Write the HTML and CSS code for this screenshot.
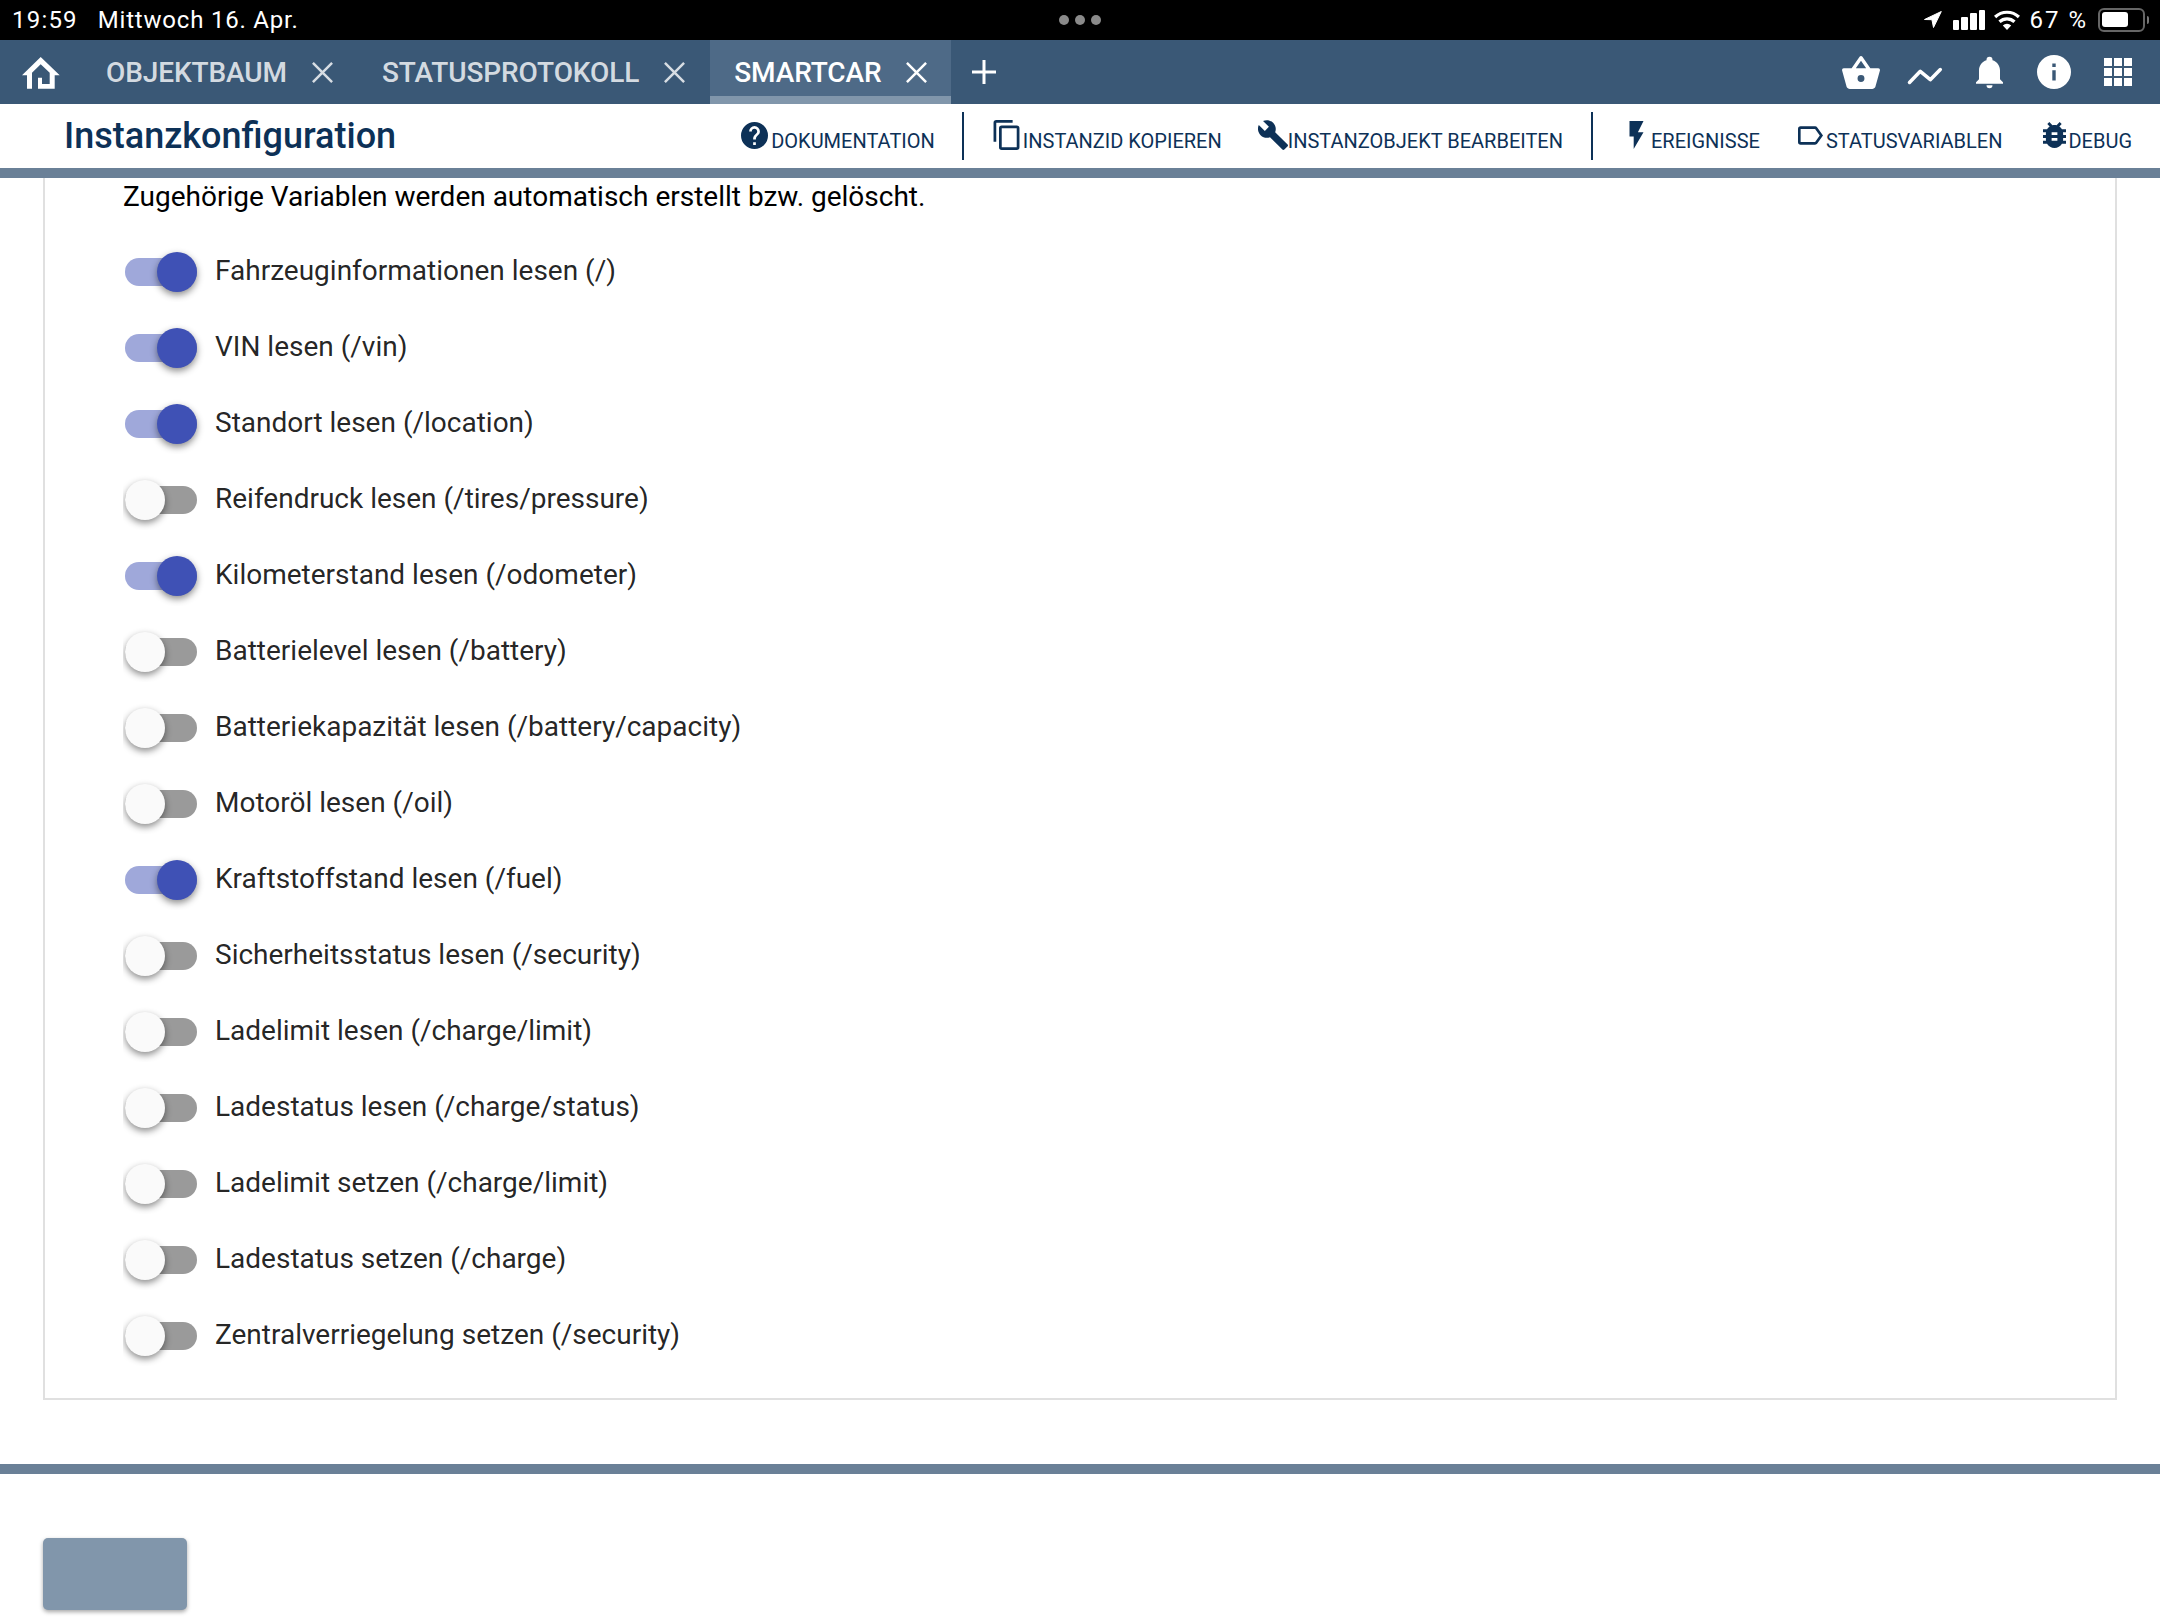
FILE: index.html
```html
<!DOCTYPE HTML>
<html>
<head>
<meta charset="utf-8">
<title>Instanzkonfiguration</title>
<link rel="stylesheet" href="styles.css">
</head>
<body>
<div class="statusbar">
    <div class="status-left"><span class="st-time">19:59</span><span class="st-date">Mittwoch 16. Apr.</span></div>
    <div class="status-dots"><i></i><i></i><i></i></div>
    <div class="status-right">
        <svg class="st-arrow" viewBox="0 0 18 17"><path d="M17.300 .5L9.500 16.500 7.900 8.700 .5 8.500z"/></svg>
        <div class="st-bars"><i></i><i></i><i></i><i></i></div>
        <svg class="st-wifi" viewBox="1 0 26 20"><path d="M14 20l-4.200-4.600a6 6 0 0 1 8.400 0zM7.600 13a9.300 9.300 0 0 1 12.800 0l2.200-2.400a12.600 12.600 0 0 0-17.200 0zM3.200 8.200a15.600 15.600 0 0 1 21.600 0L27 5.800a19 19 0 0 0-26 0z"/></svg>
        <span>67 %</span>
        <div class="st-battery"><i></i></div>
    </div>
</div>

<div class="navbar">
    <svg class="nav-home" viewBox="0 0 38 32"><path d="M18.700 0L37.700 18.300H32.700V31.700H16V20.700H20V27H27.700V15.700L18.700 7.300L10 15.700V31.700H5V18.300H0Z"/></svg>
    <div class="tab"><span>Objektbaum</span><svg class="nav-x" viewBox="0 0 24 24"><path d="M2 2l20 20M22 2L2 22"/></svg></div>
    <div class="tab"><span>Statusprotokoll</span><svg class="nav-x" viewBox="0 0 24 24"><path d="M2 2l20 20M22 2L2 22"/></svg></div>
    <div class="tab active"><span>SmartCar</span><svg class="nav-x" viewBox="0 0 24 24"><path d="M2 2l20 20M22 2L2 22"/></svg></div>
    <svg class="nav-plus" viewBox="0 0 24 24"><path d="M12 0v24M0 12h24"/></svg>
    <div class="nav-icons">
        <svg viewBox="1 2 22 19" class="ic-basket"><path d="M5.5,21C4.72,21 4.04,20.55 3.71,19.9V19.9L1.1,10.44L1,10A1,1 0 0,1 2,9H6.58L11.18,2.43C11.36,2.17 11.66,2 12,2C12.34,2 12.65,2.17 12.83,2.44L17.42,9H22A1,1 0 0,1 23,10L22.96,10.29L20.29,19.9C19.96,20.55 19.28,21 18.5,21H5.5M12,4.74L9,9H15L12,4.74M12,13A2,2 0 0,0 10,15A2,2 0 0,0 12,17A2,2 0 0,0 14,15A2,2 0 0,0 12,13Z"/></svg>
        <svg viewBox="0 0 36 18" class="ic-chart"><path d="M2.500 15.500L13.300 4.300 23.300 12.700 33.300 2.500"/></svg>
        <svg viewBox="3 2 18 21" class="ic-bell"><path d="M21,19V20H3V19L5,17V11C5,7.9 7.03,5.17 10,4.29C10,4.19 10,4.1 10,4A2,2 0 0,1 12,2A2,2 0 0,1 14,4C14,4.1 14,4.19 14,4.29C16.97,5.17 19,7.9 19,11V17L21,19M14,21A2,2 0 0,1 12,23A2,2 0 0,1 10,21"/></svg>
        <svg viewBox="2 2 20 20" class="ic-info"><path d="M13,9H11V7H13M13,17H11V11H13M12,2A10,10 0 0,0 2,12A10,10 0 0,0 12,22A10,10 0 0,0 22,12A10,10 0 0,0 12,2Z"/></svg>
        <div class="ic-apps"><i></i><i></i><i></i><i></i><i></i><i></i><i></i><i></i><i></i></div>
    </div>
</div>

<div class="toolbar">
    <h1>Instanzkonfiguration</h1>
    <div class="tools">
        <div class="tool t-doc"><svg viewBox="2 2 20 20"><path d="M15.07,11.25L14.17,12.17C13.45,12.89 13,13.5 13,15H11V14.5C11,13.39 11.45,12.39 12.17,11.67L13.41,10.41C13.78,10.05 14,9.55 14,9C14,7.89 13.1,7 12,7A2,2 0 0,0 10,9H8A4,4 0 0,1 12,5A4,4 0 0,1 16,9C16,9.88 15.64,10.67 15.07,11.25M13,19H11V17H13M12,2A10,10 0 0,0 2,12A10,10 0 0,0 12,22A10,10 0 0,0 22,12A10,10 0 0,0 12,2Z"/></svg><span>Dokumentation</span></div>
        <div class="sep"></div>
        <div class="tool t-copy"><svg viewBox="2 1 19 22"><path d="M19,21H8V7H19M19,5H8A2,2 0 0,0 6,7V21A2,2 0 0,0 8,23H19A2,2 0 0,0 21,21V7A2,2 0 0,0 19,5M16,1H4A2,2 0 0,0 2,3V17H4V3H16V1Z"/></svg><span>InstanzID kopieren</span></div>
        <div class="tool t-edit"><svg viewBox="1 1 22 22"><path d="M22.7,19L13.6,9.9C14.5,7.6 14,4.9 12.1,3C10.1,1 7.1,0.6 4.7,1.7L9,6L6,9L1.6,4.7C0.4,7.1 0.9,10.1 2.9,12.1C4.8,14 7.5,14.5 9.8,13.6L18.9,22.7C19.3,23.1 19.9,23.1 20.3,22.7L22.6,20.4C23.1,20 23.1,19.3 22.7,19Z"/></svg><span>Instanzobjekt bearbeiten</span></div>
        <div class="sep"></div>
        <div class="tool t-events"><svg viewBox="7 2 10 20"><path d="M7,2V13H10V22L17,10H13L17,2H7Z"/></svg><span>Ereignisse</span></div>
        <div class="tool t-vars"><svg viewBox="3 5 19 14"><path d="M16,17H5V7H16L19.55,12M17.630,5.84C17.27,5.33 16.67,5 16,5H5A2,2 0 0,0 3,7V17A2,2 0 0,0 5,19H16C16.67,19 17.27,18.66 17.63,18.15L22,12L17.63,5.84Z"/></svg><span>Statusvariablen</span></div>
        <div class="tool t-debug"><svg viewBox="4 3 16 18"><path fill-rule="evenodd" d="M14,12H10V10H14M14,16H10V14H14M20,8H17.19C16.74,7.22 16.12,6.55 15.37,6.04L17,4.41L15.59,3L13.42,5.17C12.96,5.06 12.5,5 12,5C11.5,5 11.04,5.06 10.59,5.17L8.41,3L7,4.41L8.62,6.04C7.88,6.55 7.26,7.22 6.81,8H4V10H6.09C6.04,10.33 6,10.66 6,11V12H4V14H6V15C6,15.34 6.04,15.67 6.09,16H4V18H6.81C7.85,19.79 9.78,21 12,21C14.22,21 16.15,19.79 17.19,18H20V16H17.91C17.96,15.67 18,15.34 18,15V14H20V12H18V11C18,10.66 17.96,10.33 17.91,10H20V8Z"/></svg><span>Debug</span></div>
    </div>
</div>
<div class="rule"></div>

<div class="content">
    <div class="card">
        <p class="intro">Zugehörige Variablen werden automatisch erstellt bzw. gelöscht.</p>
        <div class="row"><div class="toggle on"></div><span>Fahrzeuginformationen lesen (/)</span></div>
        <div class="row"><div class="toggle on"></div><span>VIN lesen (/vin)</span></div>
        <div class="row"><div class="toggle on"></div><span>Standort lesen (/location)</span></div>
        <div class="row"><div class="toggle"></div><span>Reifendruck lesen (/tires/pressure)</span></div>
        <div class="row"><div class="toggle on"></div><span>Kilometerstand lesen (/odometer)</span></div>
        <div class="row"><div class="toggle"></div><span>Batterielevel lesen (/battery)</span></div>
        <div class="row"><div class="toggle"></div><span>Batteriekapazität lesen (/battery/capacity)</span></div>
        <div class="row"><div class="toggle"></div><span>Motoröl lesen (/oil)</span></div>
        <div class="row"><div class="toggle on"></div><span>Kraftstoffstand lesen (/fuel)</span></div>
        <div class="row"><div class="toggle"></div><span>Sicherheitsstatus lesen (/security)</span></div>
        <div class="row"><div class="toggle"></div><span>Ladelimit lesen (/charge/limit)</span></div>
        <div class="row"><div class="toggle"></div><span>Ladestatus lesen (/charge/status)</span></div>
        <div class="row"><div class="toggle"></div><span>Ladelimit setzen (/charge/limit)</span></div>
        <div class="row"><div class="toggle"></div><span>Ladestatus setzen (/charge)</span></div>
        <div class="row"><div class="toggle"></div><span>Zentralverriegelung setzen (/security)</span></div>
    </div>
</div>
<div class="rule footer-rule"></div>
<div class="footer"><div class="save"></div></div>
</body>
</html>
```

FILE: styles.css
```css
html, body {
    margin: 0;
    height: 1620px;
    overflow: hidden;
    background: #fff;
    font-family: Roboto, "Liberation Sans", sans-serif;
}

/* ios status bar */
.statusbar {
    height: 40px;
    background: #000;
    color: #fff;
    font-size: 24px;
    display: flex;
    align-items: center;
    justify-content: space-between;
    padding: 0 12px;
    box-sizing: border-box;
    position: relative;
}
.status-left { display: flex; gap: 20px; }
.st-time { letter-spacing: 1.2px; }
.st-date { letter-spacing: .8px; }
.status-dots {
    position: absolute;
    left: 1059px;
    top: 15px;
    display: flex;
    gap: 6px;
}
.status-dots i { width: 10px; height: 10px; border-radius: 50%; background: #8a8a8a; }
.status-right { display: flex; align-items: center; }
.status-right span { margin-left: 9px; letter-spacing: 2px; }
.st-arrow { width: 18px; height: 17px; fill: #fff; stroke: #fff; stroke-width: 1; stroke-linejoin: round; margin-top: -2px; }
.st-bars { display: flex; align-items: flex-end; gap: 2.300px; margin-left: 11px; height: 20px; }
.st-bars i { width: 6.500px; background: #fff; border-radius: 1px; }
.st-bars i:nth-child(1) { height: 10px; }
.st-bars i:nth-child(2) { height: 13px; }
.st-bars i:nth-child(3) { height: 17px; }
.st-bars i:nth-child(4) { height: 20px; }
.st-wifi { width: 26px; height: 20px; fill: #fff; margin-left: 9px; }
.st-battery {
    width: 47px;
    height: 24px;
    border: 2px solid #666;
    border-radius: 6px;
    box-sizing: border-box;
    margin-left: 10px;
    margin-right: 3px;
    padding: 2px;
    position: relative;
}
.st-battery i { display: block; width: 26px; height: 15px; background: #fff; border-radius: 3px; }
.st-battery::after {
    content: "";
    position: absolute;
    right: -6px;
    top: 6px;
    width: 2px;
    height: 8px;
    background: #777;
    border-radius: 0 2px 2px 0;
}

/* tabs */
.navbar {
    height: 64px;
    background: #3a5876;
    display: flex;
    align-items: stretch;
    color: #fff;
}
.nav-home { width: 38px; height: 32px; fill: #fff; margin: 17px 0 0 22px; }
.tab {
    display: flex;
    align-items: center;
    padding: 0 24px;
    gap: 24px;
    font-size: 28px;
    font-weight: 500;
    letter-spacing: -.1px;
    text-transform: uppercase;
    color: rgba(255,255,255,.8);
    box-sizing: border-box;
}
.tab:nth-child(2) { margin-left: 23px; padding-left: 23px; }
.tab.active {
    color: #fff;
    background: #4e6a87;
    border-bottom: 8px solid #8196ab;
    padding-top: 8px;
    padding-right: 23px;
    gap: 23px;
}
.nav-x { width: 23px; height: 23px; fill: none; stroke: currentColor; stroke-width: 2.600; }
.nav-plus { width: 24px; height: 24px; fill: none; stroke: #fff; stroke-width: 3; margin: 20px 0 0 21px; }
.nav-icons {
    margin-left: auto;
    padding-right: 28px;
    display: flex;
    align-items: center;
}
.nav-icons svg { fill: #fff; flex: none; }
.ic-basket { width: 38px; height: 33px; }
.nav-icons .ic-chart {
    width: 36px;
    height: 18px;
    margin: 7px 0 0 27px;
    fill: none;
    stroke: #fff;
    stroke-width: 3.500;
    stroke-linecap: round;
    stroke-linejoin: round;
}
.ic-bell { width: 27px; height: 33px; margin-left: 33px; }
.ic-info { width: 34px; height: 34px; margin-left: 34px; }
.ic-apps {
    width: 28px;
    height: 28px;
    margin-left: 33px;
    display: grid;
    grid-template-columns: repeat(3, 1fr);
    gap: 2.500px;
}
.ic-apps i { background: #fff; }

/* title + actions */
.toolbar {
    height: 64px;
    display: flex;
    align-items: center;
    justify-content: space-between;
    color: #0d3157;
}
.toolbar h1 {
    margin: 0 0 0 64px;
    font-size: 36px;
    font-weight: 500;
}
.tools { display: flex; align-items: center; padding-right: 28px; }
.tool {
    display: flex;
    align-items: center;
    gap: 3px;
    font-size: 20px;
    text-transform: uppercase;
    padding-top: 10px;
}
.tool svg { fill: #0d3157; margin-top: -12px; }
.sep { width: 2px; height: 48px; background: #0d3157; }
.t-doc svg { width: 27px; height: 27px; }
.t-doc { margin-right: 27px; }
.t-copy { margin-left: 29px; }
.t-copy svg { width: 27px; height: 30px; }
.t-edit { margin-left: 36px; margin-right: 28px; gap: 0; }
.t-edit svg { width: 30px; height: 30px; }
.t-events { margin-left: 36px; gap: 7px; }
.t-events svg { width: 15px; height: 28px; }
.t-vars { margin-left: 38px; }
.t-vars svg { width: 25px; height: 19px; }
.t-debug { margin-left: 41px; gap: 2px; }
.t-debug svg { width: 23px; height: 26px; }

.rule { height: 10px; background: #6a8097; }

/* form */
.content {
    height: 1286px;
    padding: 0 43px;
    overflow: hidden;
}
.card {
    height: 1222px;
    box-sizing: border-box;
    border: solid #e0e0e0;
    border-width: 0 2px 2px;
    padding-left: 78px;
}
.intro {
    margin: 0;
    height: 56px;
    line-height: 38px;
    font-size: 28px;
    color: #000;
}
.row {
    height: 76px;
    display: flex;
    align-items: center;
    font-size: 28px;
    color: rgba(0,0,0,.87);
}
.row span { margin-bottom: 3px; }
.toggle {
    width: 84px;
    height: 60px;
    margin-right: 8px;
    flex: none;
    position: relative;
    overflow: hidden;
}
.toggle::before {
    content: "";
    position: absolute;
    left: 2px;
    top: 16px;
    width: 72px;
    height: 28px;
    border-radius: 14px;
    background: #9a9a9a;
}
.toggle::after {
    content: "";
    position: absolute;
    left: 2px;
    top: 10px;
    width: 40px;
    height: 40px;
    border-radius: 50%;
    background: #fafafa;
    box-shadow: 0 3px 7px rgba(0,0,0,.45);
}
.toggle.on::before { background: #9fa8da; }
.toggle.on::after { left: 34px; background: #3f51b5; }

.footer { padding: 64px 0 0 43px; }
.save {
    width: 144px;
    height: 72px;
    background: #8196ab;
    border-radius: 5px;
    box-shadow: 0 2px 4px rgba(0,0,0,.35);
}
```
